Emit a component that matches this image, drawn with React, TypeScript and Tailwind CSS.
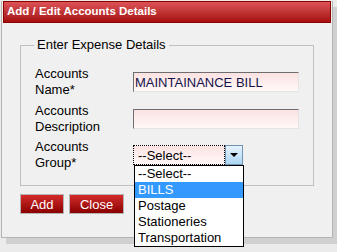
export default function App() {
  const options = ["--Select--", "BILLS", "Postage", "Stationeries", "Transportation"];
  return (
    <div className="w-[337px] h-[252px] bg-[#ebebeb] font-['Liberation_Sans',Arial,sans-serif] text-[13px] text-black overflow-hidden">
      <div className="ml-[1px] w-[332px] bg-[#f0f0f0] border border-[#b4b4b4] border-t-0 px-[1px] pb-[23px] shadow-[5px_6px_0_#d0d0d0]">
        <div className="h-[22px] mt-[1px] border border-[#8c0000] bg-gradient-to-b from-[#dc5257] to-[#a50a0a] pl-[3px] flex items-center text-white font-bold text-[11.5px] leading-none">
          Add / Edit Accounts Details
        </div>

        <fieldset className="ml-[17px] mt-[14px] w-[294px] border border-[#c0c0c0] pl-[14px] pb-[14px]">
          <legend className="ml-[-1px] px-[3px] leading-[16px]">Enter Expense Details</legend>

          <div className="mt-[13px] flex items-center">
            <div className="w-[98px] leading-[16px]">
              Accounts
              <br />
              Name*
            </div>
            <div className="w-[166px] h-[20px] border border-t-[#6e6e6e] border-l-[#6e6e6e] border-r-[#e4e4e4] border-b-[#e4e4e4] bg-gradient-to-b from-[#fbe2e2] to-[#fff8f8] flex items-center pl-[1px] text-[#14124a] leading-none">
              MAINTAINANCE BILL
            </div>
          </div>

          <div className="mt-[5px] flex items-center">
            <div className="w-[98px] leading-[16px]">
              Accounts
              <br />
              Description
            </div>
            <div className="w-[166px] h-[20px] border border-t-[#6e6e6e] border-l-[#6e6e6e] border-r-[#e4e4e4] border-b-[#e4e4e4] bg-gradient-to-b from-[#fbe2e2] to-[#fff8f8]" />
          </div>

          <div className="mt-[4px] flex items-center">
            <div className="w-[98px] leading-[16px]">
              Accounts
              <br />
              Group*
            </div>
            <div className="relative w-[110px] h-[20px] flex">
              <div className="flex-1 border border-dotted border-black bg-gradient-to-b from-[#fbe2e2] to-[#fff8f8] flex items-center pl-[4px] leading-none">
                --Select--
              </div>
              <div className="w-[18px] border border-[#6f93b3] bg-gradient-to-b from-[#e6f3fc] to-[#acd6f4] flex items-center justify-center">
                <div className="w-0 h-0 border-l-[4px] border-r-[4px] border-t-[4px] border-l-transparent border-r-transparent border-t-black" />
              </div>
              <div className="absolute left-[1px] top-[20px] w-[110px] bg-white border border-black z-10">
                {options.map((o) => (
                  <div
                    key={o}
                    className={
                      o === "BILLS"
                        ? "h-[16px] leading-[16px] pl-[3px] bg-[#3399ff] text-white"
                        : "h-[16px] leading-[16px] pl-[3px]"
                    }
                  >
                    {o}
                  </div>
                ))}
              </div>
            </div>
          </div>
        </fieldset>

        <div className="ml-[17px] mt-[8px] flex gap-[5px]">
          <button className="w-[44px] h-[20px] border border-[#b4b4b4] bg-gradient-to-b from-[#d42a2a] to-[#8a0000] text-white leading-none">
            Add
          </button>
          <button className="w-[55px] h-[20px] border border-[#b4b4b4] bg-gradient-to-b from-[#d42a2a] to-[#8a0000] text-white leading-none">
            Close
          </button>
        </div>
      </div>
    </div>
  );
}
